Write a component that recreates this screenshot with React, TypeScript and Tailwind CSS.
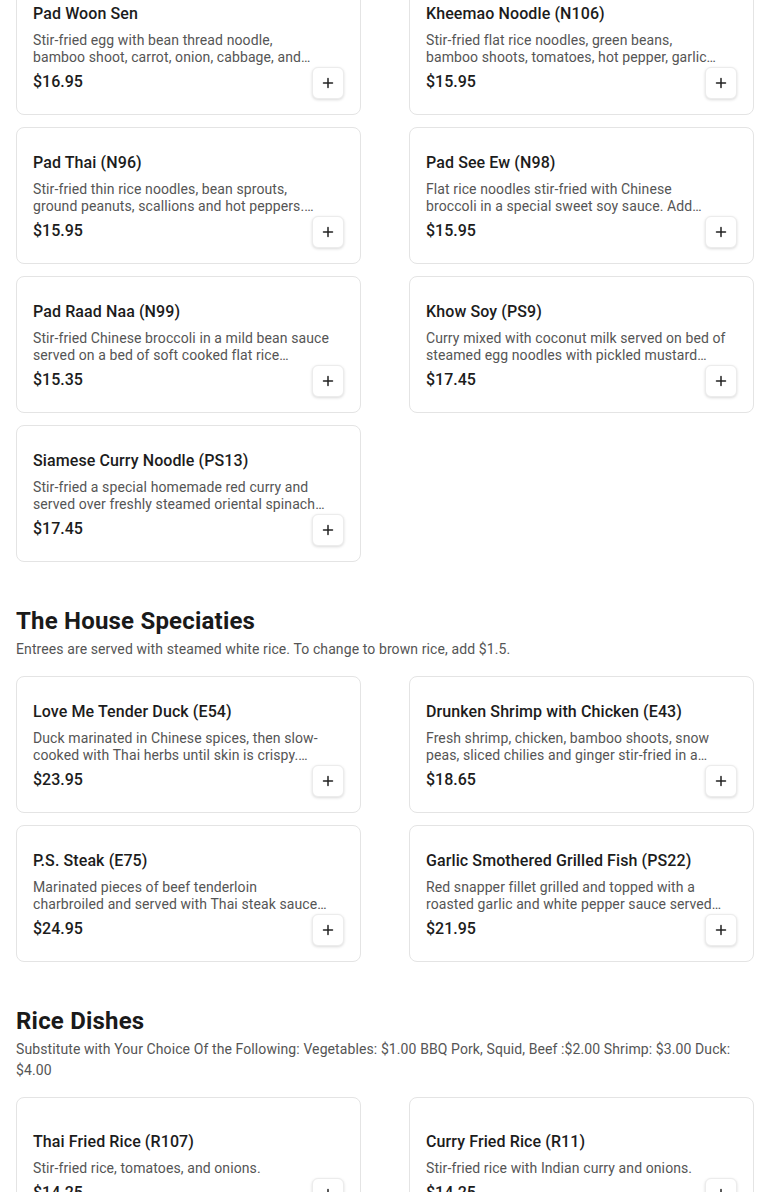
import React from "react";

type Item = { name: string; desc: string; price: string };

const noodles: Item[] = [
  { name: "Pad Woon Sen", desc: "Stir-fried egg with bean thread noodle,\nbamboo shoot, carrot, onion, cabbage, and tomatoes with your choice of meat.", price: "$16.95" },
  { name: "Kheemao Noodle (N106)", desc: "Stir-fried flat rice noodles, green beans, bamboo shoots, tomatoes, hot pepper, garlic and fresh basil leaves.", price: "$15.95" },
  { name: "Pad Thai (N96)", desc: "Stir-fried thin rice noodles, bean sprouts, ground peanuts, scallions and hot peppers. Served with lime wedge.", price: "$15.95" },
  { name: "Pad See Ew (N98)", desc: "Flat rice noodles stir-fried with Chinese\nbroccoli in a special sweet soy sauce. Add chicken, beef or pork.", price: "$15.95" },
  { name: "Pad Raad Naa (N99)", desc: "Stir-fried Chinese broccoli in a mild bean sauce served on a bed of soft cooked flat rice vermicelli noodles.", price: "$15.35" },
  { name: "Khow Soy (PS9)", desc: "Curry mixed with coconut milk served on bed of steamed egg noodles with pickled mustard greens and shallots.", price: "$17.45" },
  { name: "Siamese Curry Noodle (PS13)", desc: "Stir-fried a special homemade red curry and served over freshly steamed oriental spinach and rice noodles.", price: "$17.45" },
];

const house: Item[] = [
  { name: "Love Me Tender Duck (E54)", desc: "Duck marinated in Chinese spices, then slow-cooked with Thai herbs until skin is crispy. Served with ginger sauce.", price: "$23.95" },
  { name: "Drunken Shrimp with Chicken (E43)", desc: "Fresh shrimp, chicken, bamboo shoots, snow peas, sliced chilies and ginger stir-fried in a spicy sauce.", price: "$18.65" },
  { name: "P.S. Steak (E75)", desc: "Marinated pieces of beef tenderloin\ncharbroiled and served with Thai steak sauce accompanied by steamed vegetables.", price: "$24.95" },
  { name: "Garlic Smothered Grilled Fish (PS22)", desc: "Red snapper fillet grilled and topped with a roasted garlic and white pepper sauce served with vegetables.", price: "$21.95" },
];

const rice: Item[] = [
  { name: "Thai Fried Rice (R107)", desc: "Stir-fried rice, tomatoes, and onions.", price: "$14.25" },
  { name: "Curry Fried Rice (R11)", desc: "Stir-fried rice with Indian curry and onions.", price: "$14.25" },
];

function PlusIcon() {
  return (
    <svg width="12" height="12" viewBox="0 0 12 12" fill="none" stroke="#222" strokeWidth="1.5" strokeLinecap="round">
      <path d="M6 1.5v9M1.5 6h9" />
    </svg>
  );
}

function Card({ item }: { item: Item }) {
  return (
    <div className="min-h-[137px] flex flex-col justify-center rounded-lg border border-[#e4e4e4] bg-white px-4 pt-[23px] pb-[15px]">
      <div className="text-[16px] leading-6 font-medium text-[#1c1c1c] tracking-[0.1px] mb-[6px]">{item.name}</div>
      <div className="text-[14px] leading-[17px] tracking-[0.1px] text-[#555555] line-clamp-2 whitespace-pre-line pr-[10px]">{item.desc}</div>
      <div className="mt-[1px] flex items-center justify-between h-8">
        <div className="text-[16px] font-medium text-[#1c1c1c] -mt-[2px]">{item.price}</div>
        <button className="h-8 w-8 flex items-center justify-center rounded-md border border-[#ececec] bg-white shadow-[0_1px_3px_rgba(0,0,0,0.15)]">
          <PlusIcon />
        </button>
      </div>
    </div>
  );
}

function Grid({ items }: { items: Item[] }) {
  return (
    <div className="grid grid-cols-2 gap-x-12 gap-y-3">
      {items.map((it) => (
        <Card key={it.name} item={it} />
      ))}
    </div>
  );
}

function Section({ title, sub, items }: { title: string; sub: string; items: Item[] }) {
  return (
    <div className="mt-[43px]">
      <h2 className="text-[24px] leading-8 font-bold tracking-[0.2px] text-[#1a1a1a]">{title}</h2>
      <p className="mt-[2px] text-[14px] leading-[21px] tracking-[0.1px] text-[#555555] mb-[16px]">{sub}</p>
      <Grid items={items} />
    </div>
  );
}

export default function App() {
  return (
    <div className="h-[1192px] overflow-hidden bg-white" style={{ fontFamily: "Roboto, 'Noto Sans', sans-serif" }}>
      <div className="px-4 -mt-[22px]">
        <Grid items={noodles} />
        <Section
          title="The House Speciaties"
          sub="Entrees are served with steamed white rice. To change to brown rice, add $1.5."
          items={house}
        />
        <Section
          title="Rice Dishes"
          sub="Substitute with Your Choice Of the Following: Vegetables: $1.00 BBQ Pork, Squid, Beef :$2.00 Shrimp: $3.00 Duck: $4.00"
          items={rice}
        />
      </div>
    </div>
  );
}
